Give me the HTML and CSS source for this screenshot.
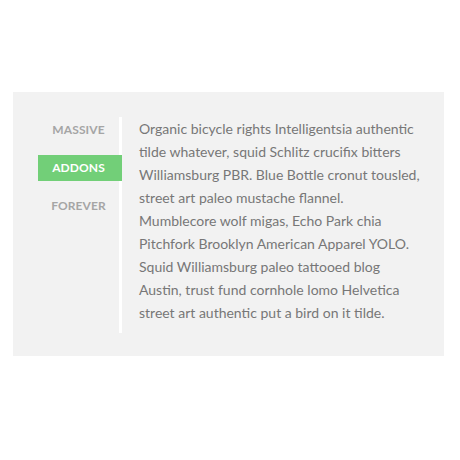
FILE: index.html
```html
<!DOCTYPE html>
<html>
<head>
<meta charset="utf-8">
<link rel="stylesheet" href="styles.css">
</head>
<body>
<div class="panel">
  <ul class="tabs">
    <li class="tab">Massive</li>
    <li class="tab active">Addons</li>
    <li class="tab">Forever</li>
  </ul>
  <p class="content">Organic bicycle rights Intelligentsia authentic<br>
  tilde whatever, squid Schlitz crucifix bitters<br>
  Williamsburg PBR. Blue Bottle cronut tousled,<br>
  street art paleo mustache flannel.<br>
  Mumblecore wolf migas, Echo Park chia<br>
  Pitchfork Brooklyn American Apparel YOLO.<br>
  Squid Williamsburg paleo tattooed blog<br>
  Austin, trust fund cornhole lomo Helvetica<br>
  street art authentic put a bird on it tilde.</p>
</div>
</body>
</html>
```
FILE: styles.css
```css
html, body {
  margin: 0;
  padding: 0;
  background: #fff;
}
body {
  font-family: Lato, "Open Sans", sans-serif;
}
.panel {
  margin: 92px 0 0 13px;
  width: 431px;
  height: 264px;
  box-sizing: border-box;
  background: #f2f2f2;
  padding: 25px 0 0 25px;
  display: flex;
  align-items: flex-start;
}
.tabs {
  list-style: none;
  margin: 0;
  padding: 0 0 102px 0;
  width: 81px;
  border-right: 3px solid #fff;
  flex-shrink: 0;
}
.tab {
  height: 26px;
  line-height: 26px;
  margin-bottom: 12px;
  text-align: center;
  text-transform: uppercase;
  font-size: 12px;
  font-weight: 700;
  color: #a5a5a5;
  letter-spacing: 0.1px;
}
.tab.active {
  background: #72cf78;
  color: #fff;
  margin-right: -3px;
  padding-right: 3px;
}
.content {
  margin: 0 0 0 17px;
  width: 290px;
  white-space: nowrap;
  font-size: 14px;
  line-height: 23px;
  color: #777;
}
```
